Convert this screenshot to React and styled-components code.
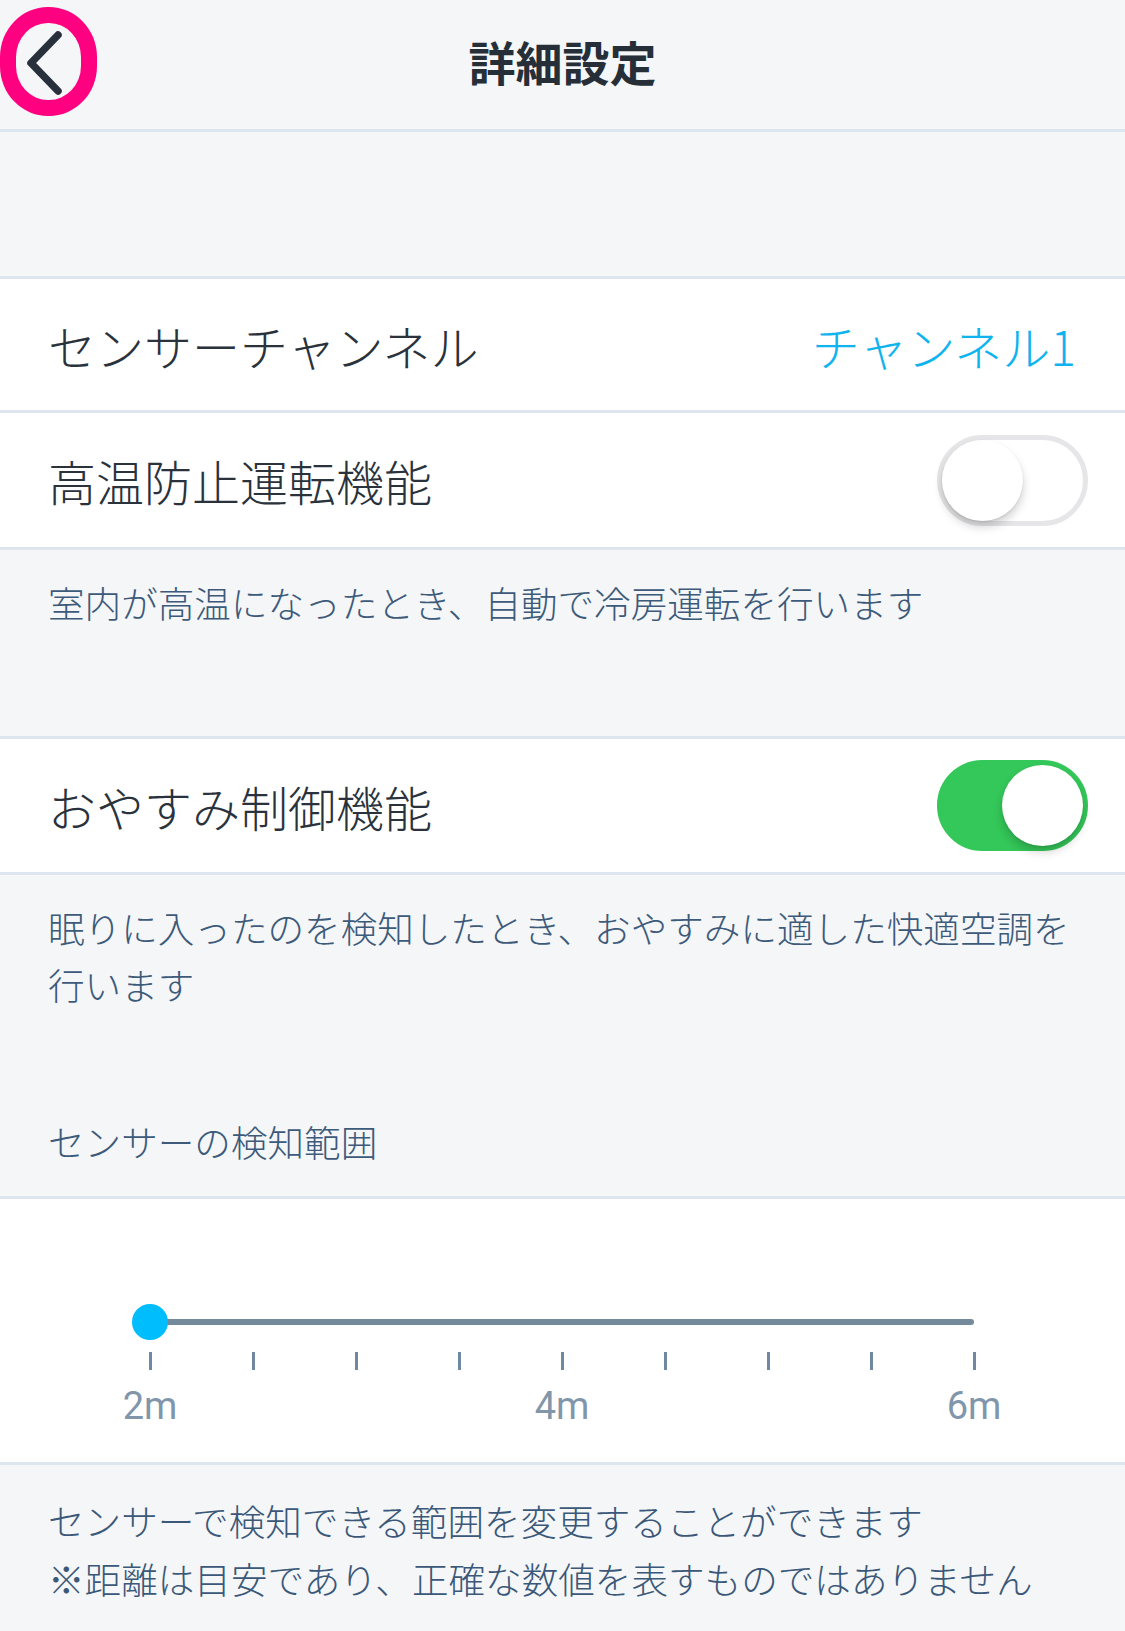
import React from 'react';
import styled, { createGlobalStyle } from 'styled-components';

const GlobalStyle = createGlobalStyle`
  html, body {
    margin: 0;
    padding: 0;
    background: #f4f6f8;
  }
  body {
    font-family: "Noto Sans CJK JP", "Noto Sans", sans-serif;
  }
`;

const Page = styled.div`
  width: 1125px;
  min-height: 1631px;
  background: #f4f6f8;
  color: #2a323c;
`;

const Header = styled.header`
  height: 129px;
  display: grid;
  grid-template-columns: 120px 1fr 120px;
  align-items: center;
  border-bottom: 3px solid #dde5ef;
`;

const BackButton = styled.button`
  width: 97px;
  height: 109px;
  margin: 0;
  padding: 0;
  box-sizing: border-box;
  border: 16px solid #ff0080;
  border-radius: 48px / 50px;
  background: transparent;
  display: flex;
  align-items: center;
  justify-content: center;
  align-self: start;
  margin-top: 7px;
`;

const Title = styled.h1`
  margin: 0 0 8px;
  text-align: center;
  font-size: 47px;
  font-weight: 700;
  color: #262e37;
`;

const Spacer = styled.div`
  height: 144px;
`;

const Group = styled.section`
  background: #fff;
  border-top: 3px solid #dde5ef;
  border-bottom: 3px solid #dde5ef;
`;

const Row = styled.div`
  height: ${(p) => p.$h}px;
  display: flex;
  align-items: center;
  justify-content: space-between;
  padding: 0 37px 0 48px;
  & + & {
    border-top: 3px solid #dde5ef;
  }
`;

const Label = styled.span`
  font-size: 48px;
  font-weight: 300;
  color: #2a323c;
`;

const Value = styled.span`
  font-size: 48px;
  font-weight: 300;
  color: #0fb4ee;
  margin-right: 12px;
`;

const Toggle = styled.div`
  position: relative;
  width: 151px;
  height: 91px;
  box-sizing: border-box;
  border-radius: 46px;
  background: ${(p) => (p.$on ? '#34c759' : '#fff')};
  border: 5px solid ${(p) => (p.$on ? '#34c759' : '#e6e6e8')};
`;

const Knob = styled.div`
  position: absolute;
  top: 0;
  left: ${(p) => (p.$on ? '60px' : '0')};
  width: 81px;
  height: 81px;
  border-radius: 50%;
  background: #fff;
  box-shadow: 0 6px 10px rgba(0, 0, 0, 0.18), 0 1px 2px rgba(0, 0, 0, 0.1);
`;

const Description = styled.div`
  padding: 24px 30px ${(p) => p.$pb}px 48px;
  font-size: 36.6px;
  font-weight: 300;
  line-height: 57px;
  color: #3d5a7a;
`;

const SectionLabel = styled.div`
  margin-top: 100px;
`;

const SliderSection = styled.section`
  background: #fff;
  border-top: 3px solid #dde5ef;
  border-bottom: 3px solid #dde5ef;
  padding: 105px 151px 34px 150px;
`;

const TrackWrap = styled.div`
  position: relative;
  height: 36px;
  display: flex;
  align-items: center;
`;

const Track = styled.div`
  width: 100%;
  height: 6px;
  border-radius: 3px;
  background: #738a9c;
`;

const Thumb = styled.div`
  position: absolute;
  left: -18px;
  top: 0;
  width: 36px;
  height: 36px;
  border-radius: 50%;
  background: #00bdfd;
`;

const Ticks = styled.div`
  margin: 12px -1.5px 0;
  height: 18px;
  display: flex;
  justify-content: space-between;
`;

const Tick = styled.span`
  width: 3px;
  height: 18px;
  background: #7088a0;
`;

const Scale = styled.div`
  margin-top: 14px;
  display: flex;
  justify-content: space-between;
`;

const ScaleLabel = styled.span`
  width: 0;
  display: flex;
  justify-content: center;
  white-space: nowrap;
  font-family: Roboto, "Liberation Sans", sans-serif;
  font-size: 38px;
  line-height: 44px;
  color: #8196ab;
`;

const Footer = styled.div`
  padding: 27px 30px 20px 48px;
  font-size: 36.6px;
  font-weight: 300;
  line-height: 58px;
  color: #3b5878;
`;

const ChevronLeft = () => (
  <svg width="65" height="77" viewBox="0 0 65 77" fill="none">
    <path
      d="M42 12 L15 40 L42 68"
      stroke="#28313b"
      strokeWidth="7.5"
      strokeLinecap="round"
      strokeLinejoin="round"
    />
  </svg>
);

const Switch = ({ on }) => (
  <Toggle $on={on}>
    <Knob $on={on} />
  </Toggle>
);

const ticks = Array.from({ length: 9 });

const App = () => (
  <Page>
    <GlobalStyle />
    <Header>
      <BackButton aria-label="戻る">
        <ChevronLeft />
      </BackButton>
      <Title>詳細設定</Title>
      <span />
    </Header>

    <Spacer />

    <Group>
      <Row $h={131}>
        <Label>センサーチャンネル</Label>
        <Value>チャンネル1</Value>
      </Row>
      <Row $h={134}>
        <Label>高温防止運転機能</Label>
        <Switch on={false} />
      </Row>
    </Group>

    <Description $pb={105}>
      室内が高温になったとき、自動で冷房運転を行います
    </Description>

    <Group>
      <Row $h={133}>
        <Label>おやすみ制御機能</Label>
        <Switch on />
      </Row>
    </Group>

    <Description $pb={26}>
      眠りに入ったのを検知したとき、おやすみに適した快適空調を
      <br />
      行います
      <SectionLabel>センサーの検知範囲</SectionLabel>
    </Description>

    <SliderSection>
      <TrackWrap>
        <Track />
        <Thumb />
      </TrackWrap>
      <Ticks>
        {ticks.map((_, i) => (
          <Tick key={i} />
        ))}
      </Ticks>
      <Scale>
        <ScaleLabel>2m</ScaleLabel>
        <ScaleLabel>4m</ScaleLabel>
        <ScaleLabel>6m</ScaleLabel>
      </Scale>
    </SliderSection>

    <Footer>
      センサーで検知できる範囲を変更することができます
      <br />
      ※距離は目安であり、正確な数値を表すものではありません
    </Footer>
  </Page>
);

export default App;
